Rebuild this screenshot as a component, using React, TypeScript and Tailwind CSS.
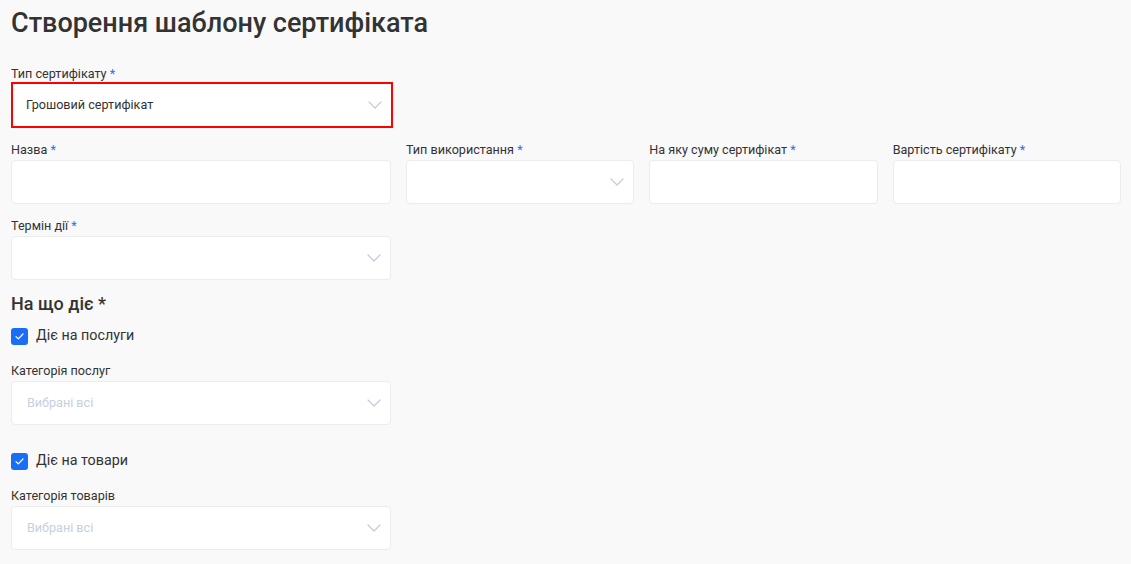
import React from "react";

const font = { fontFamily: "Roboto, 'Noto Sans', sans-serif" };

function Chevron() {
  return (
    <svg width="14" height="8" viewBox="0 0 14 8" fill="none" className="shrink-0">
      <path d="M1 1l6 6 6-6" stroke="#c3cbd6" strokeWidth="1.2" strokeLinecap="round" strokeLinejoin="round" />
    </svg>
  );
}

function Label({ text, required }: { text: string; required?: boolean }) {
  return (
    <div className="text-[12.6px] leading-4 text-[#333] mb-[2px] whitespace-nowrap">
      {text}
      {required && <span className="text-[#2f6fe4]"> *</span>}
    </div>
  );
}

function Field({
  label,
  required,
  select,
  placeholder,
}: {
  label: string;
  required?: boolean;
  select?: boolean;
  placeholder?: string;
}) {
  return (
    <div className="flex flex-col min-w-0">
      <Label text={label} required={required} />
      <div className="h-[44px] bg-white border border-[#ececec] rounded-[4px] flex items-center justify-between pl-[15px] pr-[9px]">
        <span className="text-[12.6px] text-[#c6d0de]">{placeholder}</span>
        {select && <Chevron />}
      </div>
    </div>
  );
}

function Check({ text }: { text: string }) {
  return (
    <div className="flex items-center gap-2 h-[18px]">
      <div className="w-[17px] h-[17px] rounded-[3px] bg-[#1a6ef5] flex items-center justify-center">
        <svg width="9" height="7" viewBox="0 0 9 7" fill="none">
          <path d="M1 3.6l2.3 2.2L8 1" stroke="white" strokeWidth="1.2" strokeLinecap="round" strokeLinejoin="round" />
        </svg>
      </div>
      <span className="text-[14.3px] text-[#333]">{text}</span>
    </div>
  );
}

export default function App() {
  return (
    <div className="min-h-[564px] bg-[#f9f9f9] pl-[11px] pr-[10px] pt-[8px]" style={font}>
      <h1 className="text-[27px] leading-[31px] font-medium text-[#333]">Створення шаблону сертифіката</h1>

      <div className="mt-[27px] w-[382px]">
        <Label text="Тип сертифікату" required />
        <div className="h-[46px] bg-white border-2 border-[#ff0000] flex items-center justify-between pl-[13px] pr-[9px] -mt-[2px]">
          <span className="text-[12.6px] text-[#333]">Грошовий сертифікат</span>
          <Chevron />
        </div>
      </div>

      <div className="mt-[14px] flex gap-[15px]">
        <div className="w-[380px] shrink-0">
          <Field label="Назва" required />
        </div>
        <div className="flex-1 min-w-0">
          <Field label="Тип використання" required select />
        </div>
        <div className="flex-1 min-w-0">
          <Field label="На яку суму сертифікат" required />
        </div>
        <div className="flex-1 min-w-0">
          <Field label="Вартість сертифікату" required />
        </div>
      </div>

      <div className="mt-[14px] w-[380px]">
        <Field label="Термін дії" required select />
      </div>

      <h2 className="mt-[12px] text-[18px] leading-6 font-medium text-[#333]">На що діє *</h2>

      <div className="mt-[11px]">
        <Check text="Діє на послуги" />
      </div>
      <div className="mt-[18px] w-[380px]">
        <Field label="Категорія послуг" select placeholder="Вибрані всі" />
      </div>

      <div className="mt-[27px]">
        <Check text="Діє на товари" />
      </div>
      <div className="mt-[18px] w-[380px]">
        <Field label="Категорія товарів" select placeholder="Вибрані всі" />
      </div>
    </div>
  );
}
